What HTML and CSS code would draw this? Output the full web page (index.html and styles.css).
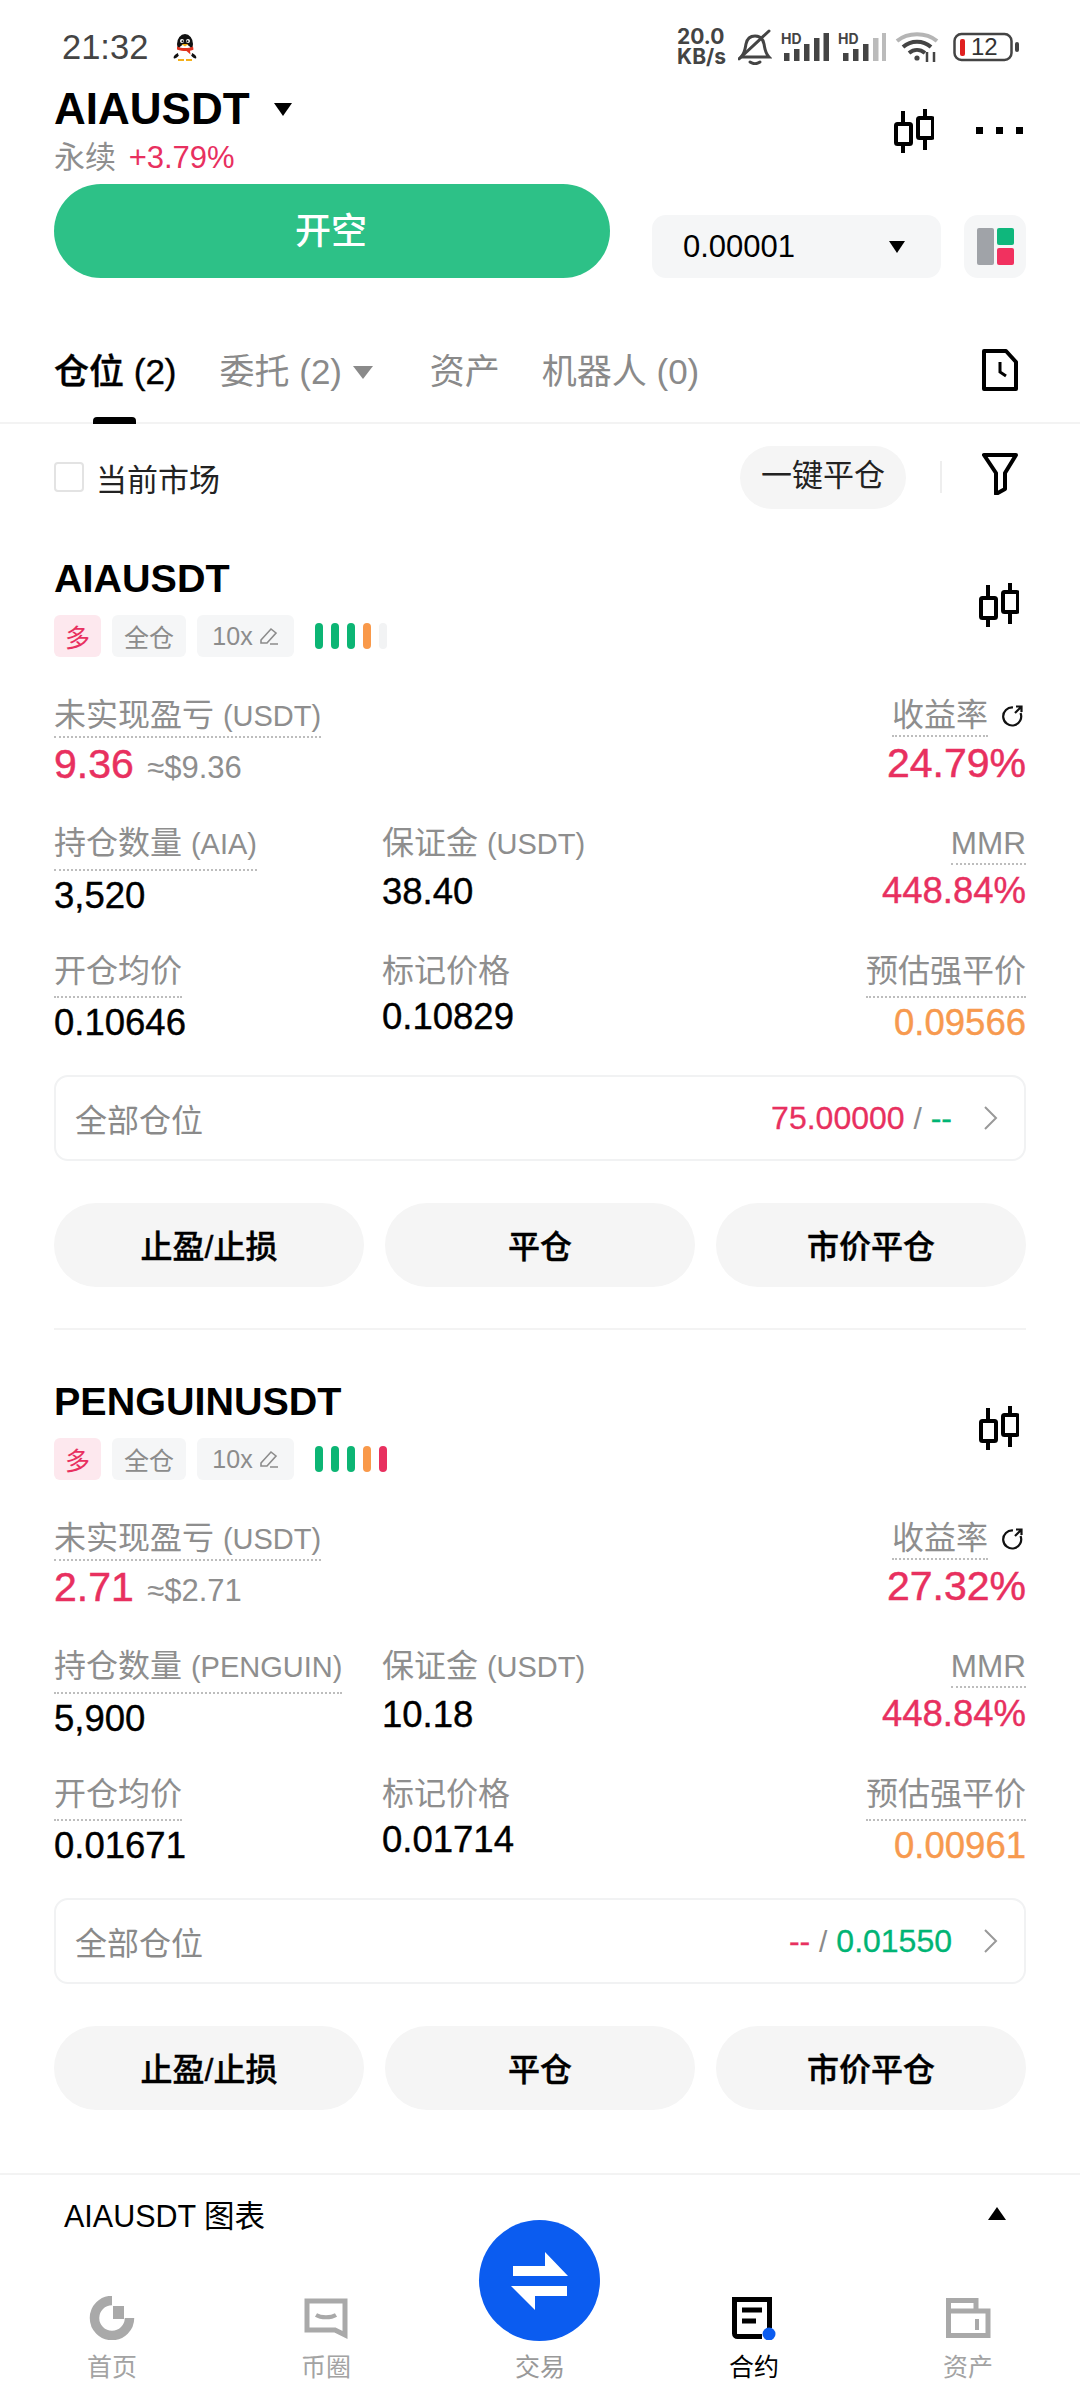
FILE: index.html
```html
<!DOCTYPE html>
<html lang="zh-CN">
<head>
    <meta charset="utf-8">
    <title>AIAUSDT 合约</title>
    <link rel="stylesheet" href="styles.css">
</head>
<body>
<svg class="sprites" width="0" height="0">
    <symbol id="candle" viewBox="0 0 40 44">
        <path d="M9 2v42M31 0v41" stroke="#000" stroke-width="4" fill="none"/>
        <rect x="2" y="15" width="15" height="20" rx="1.5" fill="#fff" stroke="#000" stroke-width="4"/>
        <rect x="24" y="9" width="15" height="20" rx="1.5" fill="#fff" stroke="#000" stroke-width="4"/>
    </symbol>
</svg>

<div class="page">
    <div class="statusbar">
        <span class="clock">21:32</span>
        <svg class="qq" width="24" height="27" viewBox="0 0 24 27">
            <path d="M5 19C1 21 0 23 1 24.500c1 .5 3-1 5-3zM19 19c4 2 5 4 4 5.500-1 .5-3-1-5-3z" fill="#111"/>
            <ellipse cx="12" cy="10" rx="8" ry="10" fill="#111"/>
            <ellipse cx="12" cy="18" rx="7" ry="7.500" fill="#fff"/>
            <circle cx="9" cy="7" r="2" fill="#fff"/>
            <circle cx="15" cy="7" r="2" fill="#fff"/>
            <circle cx="9.500" cy="7.300" r="1" fill="#111"/>
            <circle cx="14.500" cy="7.300" r="1" fill="#111"/>
            <path d="M8.500 10h7L12 12.500z" fill="#f4b01c"/>
            <path d="M4 12.500c5 2 11 2 16 0l.5 3c-1 .6-2 .9-3.500 1.200l.5 3.800-4-3.500c-3 .1-6-.4-9.500-1.500z" fill="#e1331f"/>
            <path d="M5 25h6v2H5zM13 25h6v2h-6z" fill="#f4b01c"/>
        </svg>
        <div class="status-right">
            <div class="netspeed"><span>20.0</span><span>KB/s</span></div>
            <svg width="34" height="36" viewBox="0 0 34 36" fill="none" stroke="#444" stroke-width="3">
                <path d="M3 28h28c-4-4-4-8-5-13-1-5-4-8-9-8s-8 3-9 8c-1 5-1 9-5 13z"/>
                <path d="M12 33c3 2 7 2 10 0" stroke-linecap="round"/>
                <path d="M1 30L31 2" stroke-linecap="round"/>
            </svg>
            <svg class="sig" width="48" height="36" viewBox="0 -6 48 36">
                <text x="0" y="12" class="hd">HD</text>
                <path d="M3 21h5.500v8H3zM13 17h5.500v12H13zM23 12h5.500v17H23zM33 6h5.500v23H33zM42.500 1H48v28h-5.500z" fill="#444"/>
            </svg>
            <svg class="sig" width="48" height="36" viewBox="0 -6 48 36">
                <text x="0" y="12" class="hd">HD</text>
                <path d="M5 21h5.500v8H5zM15 17h5.500v12H15zM25 12h5.500v17H25z" fill="#444"/>
                <path d="M35 6h5.500v23H35zM44 1h4v28h-4z" fill="#bbb"/>
            </svg>
            <svg width="44" height="30" viewBox="0 0 44 30" fill="none" stroke-width="4">
                <path d="M2 9c11-9 29-9 40 0" stroke="#b5b5b5"/>
                <path d="M8 15c8-7 20-7 28 0M14 21c5-4 11-4 16 0" stroke="#444"/>
                <circle cx="22" cy="26" r="2.600" fill="#444" stroke="none"/>
                <path d="M32 20v10M39 20v10" stroke="#444" stroke-width="2.500"/>
            </svg>
            <svg class="batt-ico" width="68" height="30" viewBox="0 0 68 30">
                <rect x="1.500" y="2" width="57" height="26" rx="7" fill="none" stroke="#444" stroke-width="2.500"/>
                <rect x="7" y="7" width="5" height="17" rx="2" fill="#e02020"/>
                <text x="18" y="23" class="batt">12</text>
                <rect x="62" y="10" width="4" height="10" rx="2" fill="#444"/>
            </svg>
        </div>
    </div>

    <header class="head">
        <div>
            <div class="symbol">AIAUSDT <i class="tri tri-lg"></i></div>
            <div class="perp">永续 <span class="red">+3.79%</span></div>
        </div>
        <div class="head-icons">
            <svg class="ico-candle"><use href="#candle"/></svg>
            <div class="dots"><i></i><i></i><i></i></div>
        </div>
    </header>

    <div class="action">
        <button class="short-btn">开空</button>
        <div class="picker"><span>0.00001</span><i class="tri tri-sm"></i></div>
        <div class="layout-btn">
            <div class="lay-g"></div>
            <div class="lay-col"><div class="lay-a"></div><div class="lay-b"></div></div>
        </div>
    </div>

    <nav class="tabs">
        <span class="tab on">仓位 (2)</span>
        <span class="tab">委托 (2) <i class="tri tri-gray"></i></span>
        <span class="tab tab-wide">资产</span>
        <span class="tab">机器人 (0)</span>
        <svg class="doc" width="36" height="42" viewBox="0 0 36 42" fill="none" stroke="#000" stroke-width="4">
            <path d="M2 2h22l10 11v27H2z" stroke-linejoin="round"/>
            <path d="M18 13v10l6 4" stroke-width="3"/>
        </svg>
    </nav>

    <div class="filter">
        <label class="check"><i class="box"></i>当前市场</label>
        <span class="close-all">一键平仓</span>
        <i class="sep"></i>
        <svg class="funnel" width="36" height="42" viewBox="0 0 36 42" fill="none" stroke="#000" stroke-width="4">
            <path d="M2 2h32L23 20v16l-9 5V20z" stroke-linejoin="round"/>
        </svg>
    </div>

    <section class="card">
        <div class="card-top">
            <div>
                <h2 class="card-name">AIAUSDT</h2>
                <div class="tags">
                    <span class="tag tag-long">多</span>
                    <span class="tag">全仓</span>
                    <span class="tag tag-lev">10x
                        <svg width="20" height="20" viewBox="0 0 20 20" fill="none" stroke="#8c8c8c" stroke-width="1.600"><path d="M2 14L12 3l5 4-9 10H2zM11 18h8"/></svg>
                    </span>
                    <span class="bars"><i class="g"></i><i class="g"></i><i class="g"></i><i class="o"></i><i></i></span>
                </div>
            </div>
            <svg class="ico-candle"><use href="#candle"/></svg>
        </div>
        <div class="stats">
            <div class="stat wide-stat">
                <span class="lab lab-tight">未实现盈亏 <span class="lat">(USDT)</span></span>
                <div class="big red">9.36 <small>≈$9.36</small></div>
            </div>
            <div class="stat right">
                <div class="lab-row"><span class="lab lab-tight">收益率</span><svg width="24" height="24" viewBox="0 0 24 24" fill="none" stroke="#111" stroke-width="2.200"><path d="M13 3.500A9 9 0 1 0 20.500 9M15 9l6-6M16 2.500h5.500V8"/></svg></div>
                <div class="big red">24.79%</div>
            </div>
            <div class="stat">
                <span class="lab">持仓数量 <span class="lat">(AIA)</span></span>
                <div class="val">3,520</div>
            </div>
            <div class="stat">
                <span class="lab plain">保证金 <span class="lat">(USDT)</span></span>
                <div class="val val-mid">38.40</div>
            </div>
            <div class="stat right">
                <span class="lab lab-short">MMR</span>
                <div class="val val-short red">448.84%</div>
            </div>
            <div class="stat">
                <span class="lab">开仓均价</span>
                <div class="val">0.10646</div>
            </div>
            <div class="stat">
                <span class="lab plain">标记价格</span>
                <div class="val val-low">0.10829</div>
            </div>
            <div class="stat right">
                <span class="lab">预估强平价</span>
                <div class="val orange">0.09566</div>
            </div>
        </div>
        <div class="allpos">
            <span class="allpos-name">全部仓位</span>
            <span class="allpos-nums"><b class="red">75.00000</b> <em>/</em> <b class="green">--</b></span>
            <svg width="18" height="26" viewBox="0 0 18 26" fill="none" stroke="#999" stroke-width="2"><path d="M3 2l11 11L3 24"/></svg>
        </div>
        <div class="btns">
            <button>止盈/止损</button>
            <button>平仓</button>
            <button>市价平仓</button>
        </div>
    </section>

    <div class="rule"></div>

    <section class="card">
        <div class="card-top">
            <div>
                <h2 class="card-name">PENGUINUSDT</h2>
                <div class="tags">
                    <span class="tag tag-long">多</span>
                    <span class="tag">全仓</span>
                    <span class="tag tag-lev">10x
                        <svg width="20" height="20" viewBox="0 0 20 20" fill="none" stroke="#8c8c8c" stroke-width="1.600"><path d="M2 14L12 3l5 4-9 10H2zM11 18h8"/></svg>
                    </span>
                    <span class="bars"><i class="g"></i><i class="g"></i><i class="g"></i><i class="o"></i><i class="r"></i></span>
                </div>
            </div>
            <svg class="ico-candle"><use href="#candle"/></svg>
        </div>
        <div class="stats">
            <div class="stat wide-stat">
                <span class="lab lab-tight">未实现盈亏 <span class="lat">(USDT)</span></span>
                <div class="big red">2.71 <small>≈$2.71</small></div>
            </div>
            <div class="stat right">
                <div class="lab-row"><span class="lab lab-tight">收益率</span><svg width="24" height="24" viewBox="0 0 24 24" fill="none" stroke="#111" stroke-width="2.200"><path d="M13 3.500A9 9 0 1 0 20.500 9M15 9l6-6M16 2.500h5.500V8"/></svg></div>
                <div class="big red">27.32%</div>
            </div>
            <div class="stat">
                <span class="lab">持仓数量 <span class="lat">(PENGUIN)</span></span>
                <div class="val">5,900</div>
            </div>
            <div class="stat">
                <span class="lab plain">保证金 <span class="lat">(USDT)</span></span>
                <div class="val val-mid">10.18</div>
            </div>
            <div class="stat right">
                <span class="lab lab-short">MMR</span>
                <div class="val val-short red">448.84%</div>
            </div>
            <div class="stat">
                <span class="lab">开仓均价</span>
                <div class="val">0.01671</div>
            </div>
            <div class="stat">
                <span class="lab plain">标记价格</span>
                <div class="val val-low">0.01714</div>
            </div>
            <div class="stat right">
                <span class="lab">预估强平价</span>
                <div class="val orange">0.00961</div>
            </div>
        </div>
        <div class="allpos">
            <span class="allpos-name">全部仓位</span>
            <span class="allpos-nums"><b class="red">--</b> <em>/</em> <b class="green">0.01550</b></span>
            <svg width="18" height="26" viewBox="0 0 18 26" fill="none" stroke="#999" stroke-width="2"><path d="M3 2l11 11L3 24"/></svg>
        </div>
        <div class="btns">
            <button>止盈/止损</button>
            <button>平仓</button>
            <button>市价平仓</button>
        </div>
    </section>

    <footer class="foot">
        <div class="chart-row">
            <span>AIAUSDT 图表</span>
            <i class="tri tri-up"></i>
        </div>
        <div class="tabbar">
            <div class="navitem">
                <svg width="46" height="44" viewBox="0 0 46 44" fill="none" stroke="#a9a9a9" stroke-width="9.500">
                    <path d="M23 4.500A17.500 17.500 0 1 0 40.500 22"/>
                    <path d="M24 10h11v13H24z" fill="#a9a9a9" stroke="none"/>
                </svg>
                <span>首页</span>
            </div>
            <div class="navitem">
                <svg width="46" height="44" viewBox="0 0 46 44" fill="none" stroke="#a9a9a9" stroke-width="5">
                    <path d="M4 5h38v34l-10-5H4z"/>
                    <path d="M13 19c5 3 15 3 20 0" stroke-width="4"/>
                </svg>
                <span>币圈</span>
            </div>
            <div class="navitem nav-mid">
                <div class="trade-btn">
                    <svg width="121" height="121" viewBox="0 0 121 121" fill="#fff">
                        <path d="M34 46h32V32l23 24H34z"/>
                        <path d="M88 66v10H56v14L32 66z"/>
                    </svg>
                </div>
                <span>交易</span>
            </div>
            <div class="navitem on">
                <svg width="46" height="44" viewBox="0 0 46 44" fill="none" stroke="#000" stroke-width="5">
                    <path d="M31 40.500H6.500a3 3 0 0 1-3-3V3.500h35V32"/>
                    <path d="M11 14h20M11 25h14"/>
                    <circle cx="38" cy="38" r="6.500" fill="#0b5cf0" stroke="none"/>
                </svg>
                <span>合约</span>
            </div>
            <div class="navitem">
                <svg width="46" height="44" viewBox="0 0 46 44" fill="none" stroke="#a9a9a9" stroke-width="5">
                    <path d="M31 15V4.500H3.500V39.500H43V15H3.500"/>
                    <path d="M32 23v11" stroke-width="4"/>
                </svg>
                <span>资产</span>
            </div>
        </div>
    </footer>
</div>
</body>
</html>
```

FILE: styles.css
```css
* {
    box-sizing: border-box;
}

html, body {
    margin: 0;
    padding: 0;
    background: #fff;
}

body {
    font-family: "Liberation Sans", "Noto Sans CJK SC", sans-serif;
    color: #000;
}

i, em {
    font-style: normal;
}

.sprites {
    display: block;
}

.page {
    width: 1080px;
    height: 2400px;
    display: flex;
    flex-direction: column;
    overflow: hidden;
}

.red { color: #e8305f; }
.green { color: #00b474; }
.orange { color: #f79a4f; }

/* triangles */
.tri {
    display: inline-block;
    width: 0;
    height: 0;
    border-style: solid;
    border-color: #000 transparent transparent transparent;
}
.tri-lg { border-width: 13px 9px 0 9px; margin-left: 12px; vertical-align: 8px; }
.tri-sm { border-width: 12px 8px 0 8px; }
.tri-gray { border-width: 13px 10px 0 10px; border-top-color: #8a8a8a; margin-left: 1px; vertical-align: 5px; }
.tri-up { border-width: 0 9px 13px 9px; border-color: transparent transparent #000 transparent; }

/* status bar */
.statusbar {
    height: 84px;
    padding: 10px 59px 0 62px;
    display: flex;
    align-items: center;
    color: #444;
}
.clock {
    font-size: 34.500px;
    width: 111px;
}
.status-right {
    margin-left: auto;
    display: flex;
    align-items: center;
    gap: 9px;
}
.netspeed {
    display: flex;
    flex-direction: column;
    font-family: Inter, sans-serif;
    font-size: 21px;
    font-weight: 700;
    line-height: 20px;
    color: #444;
    margin-right: 3px;
}
.sig {
    margin-top: -6px;
}
.hd {
    font: 700 14px Inter, sans-serif;
    fill: #444;
}
.batt-ico {
    margin-left: 5px;
}
.batt {
    font: 400 24px "Liberation Sans", sans-serif;
    fill: #333;
}

/* header */
.head {
    padding: 0 54px;
    height: 96px;
    display: flex;
    justify-content: space-between;
}
.symbol {
    font-size: 44px;
    font-weight: 700;
    line-height: 50px;
}
.perp {
    font-size: 31px;
    line-height: 44px;
    margin-top: 2px;
    color: #8e8e8e;
}
.perp .red {
    font-size: 31px;
    margin-left: 4px;
}
.head-icons {
    display: flex;
    align-items: center;
    gap: 42px;
    padding: 0 3px 3px 0;
}
.ico-candle {
    width: 40px;
    height: 44px;
}
.dots {
    display: flex;
    gap: 13px;
}
.dots i {
    width: 7px;
    height: 7px;
    background: #000;
}

/* action row */
.action {
    margin-top: 4px;
    height: 94px;
    padding: 0 54px;
    display: flex;
    align-items: flex-end;
}
.short-btn {
    width: 556px;
    height: 94px;
    border: 0;
    border-radius: 47px;
    background: #2dc187;
    color: #fff;
    font: 500 36px "Noto Sans CJK SC", sans-serif;
    padding: 0 2px 6px 0;
}
.picker {
    width: 289px;
    height: 63px;
    margin-left: 42px;
    padding: 0 36px 0 31px;
    border-radius: 14px;
    background: #f5f6f7;
    display: flex;
    align-items: center;
    justify-content: space-between;
    font-size: 31px;
}
.layout-btn {
    width: 62px;
    height: 63px;
    margin-left: 23px;
    border-radius: 14px;
    background: #f5f6f7;
    display: flex;
    justify-content: center;
    align-items: center;
    gap: 3px;
}
.lay-g {
    width: 17px;
    height: 37px;
    background: #a0a3a8;
    border-radius: 2px;
}
.lay-col {
    display: flex;
    flex-direction: column;
    gap: 3px;
}
.lay-a, .lay-b {
    width: 17px;
    height: 17px;
    border-radius: 2px;
}
.lay-a { background: #0fb77c; }
.lay-b { background: #f1315f; }

/* tabs */
.tabs {
    height: 146px;
    padding: 40px 54px 0 54px;
    border-bottom: 2px solid #f3f3f3;
    display: flex;
    align-items: center;
    gap: 43px;
}
.tab {
    position: relative;
    top: 2px;
    font-size: 35px;
    line-height: 46px;
    color: #8a8a8a;
    white-space: nowrap;
}
.tab.on {
    color: #000;
    font-weight: 500;
    -webkit-text-stroke: 0.4px #000;
}
.tab.on::after {
    content: "";
    position: absolute;
    left: 39px;
    top: 68px;
    width: 43px;
    height: 7px;
    border-radius: 4px 4px 0 0;
    background: #000;
}
.tab-wide { margin: 0 -1px 0 14px; }
.doc {
    margin-left: auto;
    margin-right: 8px;
}

/* filter row */
.filter {
    height: 108px;
    padding: 0 62px 2px 54px;
    display: flex;
    align-items: center;
}
.check {
    display: flex;
    align-items: center;
    gap: 12px;
    font-size: 31px;
    color: #222;
}
.box {
    width: 30px;
    height: 30px;
    border: 2px solid #e3e3e3;
    border-radius: 4px;
}
.close-all {
    margin-left: auto;
    width: 166px;
    height: 63px;
    border-radius: 32px;
    background: #f5f5f5;
    font-size: 31px;
    line-height: 60px;
    text-align: center;
    color: #222;
}
.sep {
    width: 2px;
    height: 32px;
    margin: 0 40px 0 34px;
    background: #eee;
}
.funnel {
    margin-top: -6px;
}

/* position card */
.card {
    padding: 21px 54px 0;
}
.card-top {
    display: flex;
    justify-content: space-between;
    align-items: center;
    padding-right: 7px;
}
.card-name {
    margin: 0;
    font-size: 39.500px;
    font-weight: 700;
    line-height: 50px;
}
.tags {
    margin-top: 12px;
    display: flex;
    align-items: center;
    gap: 11px;
}
.tag {
    height: 42px;
    width: 74px;
    border-radius: 6px;
    background: #f5f6f7;
    color: #8c8c8c;
    font-size: 25px;
    display: flex;
    align-items: center;
    justify-content: center;
    gap: 6px;
}
.tag-long {
    width: 47px;
    background: #fde8ee;
    color: #e8305f;
}
.tag-lev { width: 97px; }
.bars {
    margin-left: 10px;
    display: flex;
    gap: 8px;
}
.bars i {
    width: 8px;
    height: 26px;
    border-radius: 4px;
    background: #f2f3f4;
}
.bars .g { background: #0cb574; }
.bars .o { background: #f9994a; }
.bars .r { background: #e8305f; }

/* numbers */
.stats {
    margin-top: 38px;
    display: grid;
    grid-template-columns: 328px 1fr auto;
    grid-template-rows: 128px 128px 124px;
}
.wide-stat {
    grid-column: 1 / 3;
}
.stat.right {
    display: flex;
    flex-direction: column;
    align-items: flex-end;
    text-align: right;
}
.lab {
    display: inline-block;
    font-size: 32px;
    line-height: 40px;
    padding-bottom: 5px;
    color: #8e8e8e;
    border-bottom: 2px dotted #bdbdbd;
    white-space: nowrap;
}
.lat {
    font-size: 29px;
}
.lab-tight { padding-bottom: 0; }
.lab-short {
    padding-bottom: 0;
    font-size: 31.500px;
}
.lab.plain {
    padding-bottom: 0;
    border-bottom: 0;
}
.lab-row {
    display: flex;
    align-items: flex-start;
    gap: 12px;
}
.lab-row svg {
    margin-top: 9px;
    margin-right: 2px;
}
.big {
    font-size: 41px;
    line-height: 52px;
    -webkit-text-stroke: 0.5px currentColor;
}
.big small {
    font-size: 31px;
    color: #8e8e8e;
    margin-left: 2px;
    -webkit-text-stroke: 0;
}
.val {
    font-size: 36.500px;
    line-height: 50px;
    -webkit-text-stroke: 0.4px currentColor;
}
.val-mid { line-height: 56px; }
.val-low { line-height: 52px; }
.val-short { line-height: 52px; }

/* all positions row */
.allpos {
    height: 86px;
    padding: 0 24px 0 19px;
    border: 2px solid #f1f2f3;
    border-radius: 14px;
    display: flex;
    align-items: center;
}
.allpos-name {
    font-size: 32px;
    color: #8a8a8a;
}
.allpos-nums {
    margin-left: auto;
    margin-right: 30px;
    font-size: 32px;
}
.allpos-nums b {
    font-weight: 400;
    -webkit-text-stroke: 0.3px currentColor;
}
.allpos-nums em {
    color: #8a8a8a;
    font-size: 30px;
}

.btns {
    margin-top: 42px;
    display: flex;
    justify-content: space-between;
}
.btns button {
    width: 310px;
    height: 84px;
    border: 0;
    border-radius: 42px;
    padding: 0 0 2px;
    background: #f5f5f5;
    color: #000;
    font: 500 32px "Liberation Sans", "Noto Sans CJK SC", sans-serif;
    -webkit-text-stroke: 0.4px #000;
}

.rule {
    height: 2px;
    margin: 41px 54px 25px;
    background: #f3f3f3;
}

/* footer */
.foot {
    margin-top: auto;
    height: 227px;
    border-top: 2px solid #f3f3f3;
}
.chart-row {
    height: 80px;
    padding: 0 74px 3px 64px;
    display: flex;
    align-items: center;
    justify-content: space-between;
    font-size: 30.500px;
}
.tabbar {
    margin-top: 41px;
    padding: 0 5px;
    display: grid;
    grid-template-columns: repeat(5, 214px);
}
.navitem {
    position: relative;
    display: flex;
    flex-direction: column;
    align-items: center;
    font-size: 25px;
    line-height: 34px;
    color: #a3a3a3;
}
.navitem svg { display: block; }
.navitem span { margin-top: 10px; }
.navitem.on { color: #000; }
.nav-mid span { margin-top: 54px; color: #999; }
.trade-btn {
    position: absolute;
    top: -76px;
    left: 46px;
    width: 121px;
    height: 121px;
    border-radius: 50%;
    background: #0b5cf0;
}
```
